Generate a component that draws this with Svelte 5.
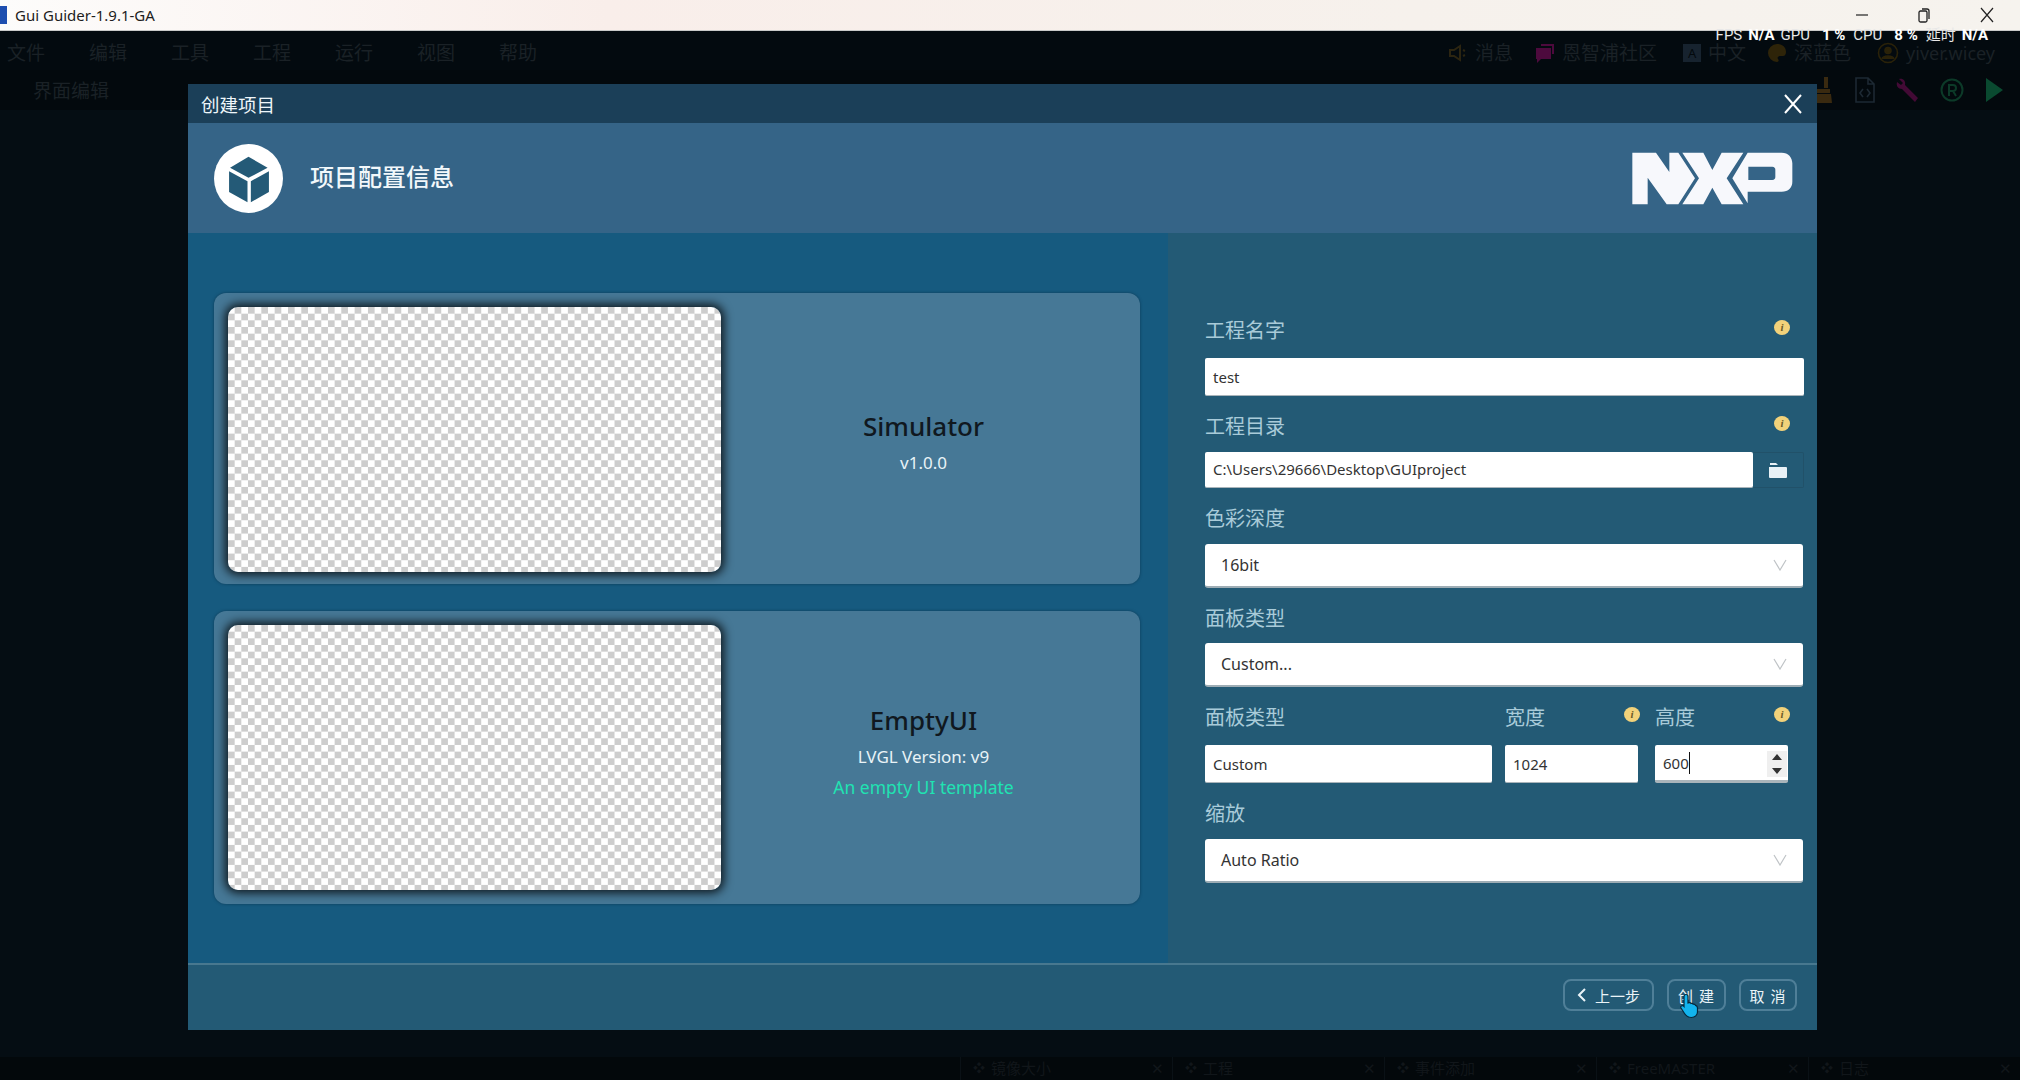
<script>
	const menus = ['文件', '编辑', '工具', '工程', '运行', '视图', '帮助'];
	const tabs = ['镜像大小', '工程', '事件添加', 'FreeMASTER', '日志'];
</script>

<div class="app">
	<header class="titlebar">
		<span class="app-logo"></span>
		<span class="app-name">Gui Guider-1.9.1-GA</span>
		<div class="win-btns">
			<svg width="14" height="14" viewBox="0 0 14 14"><path d="M1 7h12" stroke="#222" stroke-width="1.2" /></svg>
			<svg width="14" height="16" viewBox="0 0 14 16" fill="none" stroke="#222" stroke-width="1.3"><rect x="2" y="4" width="8" height="11" rx="1.5" /><path d="M5 2h5a2 2 0 0 1 2 2v8" /></svg>
			<svg width="16" height="16" viewBox="0 0 16 16"><path d="M2 1l12 14M14 1L2 15" stroke="#222" stroke-width="1.2" /></svg>
		</div>
	</header>

	<nav class="menubar">
		{#each menus as m}
			<span>{m}</span>
		{/each}
		<div class="menu-right">
			<span class="mi">
				<svg width="20" height="20" viewBox="0 0 20 20" fill="none" stroke="#2c2511" stroke-width="2"><path d="M2 7h4l6-4v14l-6-4H2zM15 7l2 1M15 13l2-1" /></svg>
				消息
			</span>
			<span class="mi chat">
				<svg width="20" height="22" viewBox="0 0 20 22"><path d="M1 6h15v11H6l-4 4v-4H1zM6 2h13v10h-2V4H6z" fill="#4d0a3d" /></svg>
				恩智浦社区
			</span>
			<span class="mi lang">
				<span class="lang-box">A</span>
				中文
			</span>
			<span class="mi">
				<svg width="20" height="20" viewBox="0 0 20 20"><path d="M10 1a9 9 0 1 0 0 18c2 0 2-2 1-3s0-3 2-3h3c2 0 3-2 3-4 0-5-4-8-9-8z" fill="#2e2409" /></svg>
				深蓝色
			</span>
			<span class="mi user">
				<svg width="22" height="22" viewBox="0 0 22 22" fill="none" stroke="#2a2209" stroke-width="1.6"><circle cx="11" cy="11" r="9.5" /><circle cx="11" cy="8.5" r="3" fill="#2a2209" /><path d="M5 17c1-4 11-4 12 0" fill="#2a2209" /></svg>
				yiver.wicey
			</span>
		</div>
	</nav>

	<div class="stats">
		<span>FPS</span><b>N/A</b><span>GPU</span><b class="w">1 %</b><span>CPU</span><b class="w">8 %</b><span>延时</span><b>N/A</b>
	</div>

	<div class="toolbar">
		<span class="tool-name">界面编辑</span>
		<div class="tool-icons">
			<svg width="24" height="28" viewBox="0 0 24 28"><path d="M14 1h4v11h-4zM6 13h14v4H6zM5 18h16l1 9H4z" fill="#3a2a10" /></svg>
			<svg width="22" height="26" viewBox="0 0 22 26" fill="none" stroke="#1d2933" stroke-width="1.6"><path d="M2 1h12l6 6v18H2zM14 1v6h6M9 12l-3 4 3 4M13 12l3 4-3 4" /></svg>
			<svg width="24" height="26" viewBox="0 0 24 26"><path d="M3 2c4-1 7 2 6 6l13 13-3 4L6 12C2 12 0 9 1 5l4 3 2-2z" fill="#430a35" /></svg>
			<svg width="24" height="24" viewBox="0 0 24 24" fill="none" stroke="#0c3a28" stroke-width="2"><circle cx="12" cy="12" r="10.5" /><path d="M9 18V7h4a3 3 0 0 1 0 6H9m4 0l3 5" /></svg>
			<svg width="20" height="26" viewBox="0 0 20 26"><path d="M2 1l17 12L2 25z" fill="#0a4a30" /></svg>
		</div>
	</div>

	<main class="workspace"></main>

	<footer class="bottom-tabs">
		{#each tabs as t}
			<div class="tab">
				<span class="tab-icon">❖</span>
				<span>{t}</span>
				<span class="tab-x">✕</span>
			</div>
		{/each}
	</footer>

	<section class="modal">
		<div class="modal-title">
			<span>创建项目</span>
			<svg width="18" height="20" viewBox="0 0 18 20"><path d="M1 1l16 18M17 1L1 19" stroke="#fff" stroke-width="2" /></svg>
		</div>

		<div class="modal-head">
			<svg class="cube" width="69" height="69" viewBox="72 54 206 206">
				<circle cx="175" cy="157" r="103" fill="#fff" />
				<path d="M175 92l57 33-57 30-55-30zM117 135l55 30v63l-55-31zM182 165l54-30v62l-54 31z" fill="#245a77" />
			</svg>
			<h1>项目配置信息</h1>
			<svg class="nxp" width="175" height="65" viewBox="0 0 525 195" fill="#f7f8fc">
				<path d="M22 20h71l40 58V20h27l50 77-50 78h-35L68 95v80H22z" />
				<path d="M172 20h63l27 52 28-52h65l-50 77 50 78h-65l-28-50-27 50h-63l50-78z" />
				<path fill-rule="evenodd" d="M368 20h102c20 0 32 14 32 32v55c0 18-12 30-32 30H368v35l-46-75zM370 62v40h72c6 0 9-4 9-9V71c0-5-3-9-9-9z" />
			</svg>
		</div>

		<div class="modal-body">
			<div class="templates">
				<article class="card">
					<div class="preview"></div>
					<div class="card-info">
						<h2>Simulator</h2>
						<p>v1.0.0</p>
					</div>
				</article>
				<article class="card second">
					<div class="preview"></div>
					<div class="card-info">
						<h2>EmptyUI</h2>
						<p>LVGL Version: v9</p>
						<p class="desc">An empty UI template</p>
					</div>
				</article>
			</div>

			<form class="config">
				<div class="field">
					<div class="label tight"><span>工程名字</span><i class="info">i</i></div>
					<div class="input">test</div>
				</div>
				<div class="field">
					<div class="label"><span>工程目录</span><i class="info">i</i></div>
					<div class="dir-row">
						<div class="input dir">C:\Users\29666\Desktop\GUIproject</div>
						<div class="folder">
							<svg width="18" height="15" viewBox="0 0 18 15"><path d="M1 0h6l2 2H1zM0 4h17a1 1 0 0 1 1 1v9a1 1 0 0 1-1 1H1a1 1 0 0 1-1-1z" fill="#e8f1f6" /></svg>
						</div>
					</div>
				</div>
				<div class="field">
					<div class="label"><span>色彩深度</span></div>
					<div class="select">16bit<svg width="14" height="12" viewBox="0 0 14 12"><path d="M1 1l6 10 6-10" fill="none" stroke="#bfc3c6" stroke-width="1.2" /></svg></div>
				</div>
				<div class="field">
					<div class="label low"><span>面板类型</span></div>
					<div class="select">Custom...<svg width="14" height="12" viewBox="0 0 14 12"><path d="M1 1l6 10 6-10" fill="none" stroke="#bfc3c6" stroke-width="1.2" /></svg></div>
				</div>
				<div class="field size-row">
					<div class="col name">
						<div class="label tight"><span>面板类型</span></div>
						<div class="input">Custom</div>
					</div>
					<div class="col width">
						<div class="label tight"><span>宽度</span><i class="info">i</i></div>
						<div class="input">1024</div>
					</div>
					<div class="col height">
						<div class="label tight"><span>高度</span><i class="info">i</i></div>
						<div class="input focused">
							<span>600</span><span class="caret"></span>
							<span class="spin">
								<svg width="10" height="22" viewBox="0 0 10 22"><path d="M5 1l5 6H0zM0 15h10l-5 6z" fill="#333" /></svg>
							</span>
						</div>
					</div>
				</div>
				<div class="field">
					<div class="label"><span>缩放</span></div>
					<div class="select">Auto Ratio<svg width="14" height="12" viewBox="0 0 14 12"><path d="M1 1l6 10 6-10" fill="none" stroke="#bfc3c6" stroke-width="1.2" /></svg></div>
				</div>
			</form>
		</div>

		<div class="modal-foot">
			<button class="btn back" type="button">
				<svg width="10" height="14" viewBox="0 0 10 14"><path d="M8 1L2 7l6 6" fill="none" stroke="#eaf4f8" stroke-width="2" /></svg>
				上一步
			</button>
			<button class="btn create" type="button">创 建</button>
			<button class="btn cancel" type="button">取 消</button>
			<svg class="hand" width="20" height="26" viewBox="0 0 20 26">
				<path d="M6 1.500c1.500 0 2 1 2 2V10l1-.3c1-.2 1.700.2 2 .8 1-.3 1.800 0 2.200.7 1-.2 2 .3 2.300 1.200 1 .2 2 1 2 2.600v4c0 3-2.500 5.500-6 5.500-3.500 0-5.500-1.500-7-4L1 15c-.6-1 0-2 .8-2.300.8-.3 1.700 0 2.200.7V3.500c0-1.200.8-2 2-2z" fill="#12b4ee" stroke="#06283c" stroke-width="1.200" />
			</svg>
		</div>
	</section>
</div>

<style>
	:global(body) {
		margin: 0;
		background: #050d13;
	}

	.app {
		position: relative;
		width: 2020px;
		height: 1080px;
		overflow: hidden;
		display: flex;
		flex-direction: column;
		background: #050d13;
		font-family: 'Noto Sans', 'Noto Sans CJK SC', sans-serif;
	}

	.titlebar {
		position: relative;
		z-index: 1;
		flex: none;
		height: 30px;
		display: flex;
		align-items: center;
		background: linear-gradient(90deg, #fdfcfb, #f9eeea 30%, #f6f1ec 70%, #f6f3ee);
		border-bottom: 1px solid #c9c9c9;
	}

	.app-logo {
		width: 7px;
		height: 18px;
		background: #1e4fb0;
	}

	.app-name {
		margin-left: 8px;
		font-size: 15px;
		color: #1d1d1d;
	}

	.win-btns {
		margin-left: auto;
		margin-right: 25px;
		display: flex;
		align-items: center;
		gap: 48px;
	}

	.menubar {
		flex: none;
		height: 39px;
		box-sizing: border-box;
		padding: 4px 0 0 7px;
		display: flex;
		align-items: center;
		gap: 44px;
		background: #030a0f;
		color: #1a2126;
		font-size: 19px;
		line-height: 20px;
	}

	.menu-right {
		margin-left: auto;
		margin-right: 25px;
		display: flex;
		align-items: center;
		gap: 26px;
	}

	.mi {
		display: flex;
		align-items: center;
		gap: 7px;
	}

	.mi.chat {
		margin-left: -4px;
	}

	.mi.lang {
		margin-right: -5px;
	}

	.mi.user {
		font-size: 18px;
	}

	.lang-box {
		width: 18px;
		height: 18px;
		background: #17232f;
		color: #03090d;
		font-size: 13px;
		line-height: 18px;
		text-align: center;
	}

	.stats {
		position: absolute;
		z-index: 2;
		top: 28px;
		right: 32px;
		display: flex;
		gap: 6px;
		font-family: Roboto, 'Noto Sans CJK SC', sans-serif;
		font-size: 15px;
		line-height: 14px;
		color: #e8e8e8;
	}

	.stats b {
		color: #fff;
	}

	.stats .w {
		margin: 0 2px 0 6px;
	}

	.toolbar {
		flex: none;
		height: 40px;
		display: flex;
		align-items: center;
		background: #03090d;
		color: #1a2126;
		font-size: 19px;
	}

	.tool-name {
		margin-left: 33px;
	}

	.tool-icons {
		margin-left: auto;
		margin-right: 16px;
		display: flex;
		align-items: center;
		gap: 20px;
	}

	.workspace {
		flex: 1;
	}

	.bottom-tabs {
		flex: none;
		height: 23px;
		display: flex;
		justify-content: flex-end;
		background: #03080b;
		color: #11161a;
		font-size: 15px;
		line-height: 23px;
	}

	.tab {
		width: 212px;
		box-sizing: border-box;
		display: flex;
		gap: 6px;
		padding: 0 8px 0 12px;
		border-left: 1px solid #0a1116;
	}

	.tab-icon {
		font-size: 12px;
	}

	.tab-x {
		margin-left: auto;
	}

	.modal {
		position: absolute;
		z-index: 3;
		left: 188px;
		top: 84px;
		width: 1629px;
		height: 946px;
		display: flex;
		flex-direction: column;
		background: #235a75;
	}

	.modal-title {
		flex: none;
		height: 39px;
		display: flex;
		align-items: center;
		justify-content: space-between;
		padding: 0 15px 0 13px;
		background: #1b3f58;
		color: #eef6fa;
		font-size: 18.500px;
	}

	.modal-head {
		flex: none;
		height: 110px;
		display: flex;
		align-items: center;
		padding: 0 17px 0 26px;
		background: #356487;
	}

	.modal-head h1 {
		margin: -6px 0 0 27px;
		font-size: 24px;
		font-weight: 500;
		color: #f2f8fb;
	}

	.nxp {
		margin-left: auto;
	}

	.modal-body {
		flex: none;
		height: 730px;
		display: flex;
	}

	.templates {
		flex: none;
		width: 980px;
		box-sizing: border-box;
		padding: 60px 28px 0 26px;
		background: #165a7f;
	}

	.card {
		height: 291px;
		box-sizing: border-box;
		display: flex;
		padding: 14px;
		border-radius: 12px;
		background: #467896;
		box-shadow: 0 0 3px rgba(8, 45, 70, 0.7);
	}

	.card.second {
		height: 293px;
		margin-top: 27px;
	}

	.preview {
		flex: none;
		width: 493px;
		height: 265px;
		border-radius: 10px;
		background: repeating-conic-gradient(#cdcdcd 0 25%, #fff 0 50%) 0 0 / 13.33px 13.33px;
		box-shadow: 0 0 10px 3px rgba(0, 0, 0, 0.8);
	}

	.card-info {
		flex: 1;
		display: flex;
		flex-direction: column;
		justify-content: center;
		align-items: center;
		padding-top: 8px;
		text-align: center;
		color: #e9f3f7;
	}

	.second .card-info {
		padding: 0 0 12px;
	}

	.card-info h2 {
		margin: 0 0 4px;
		font-size: 26px;
		font-weight: 500;
		line-height: 36px;
		color: #10181f;
	}

	.card-info p {
		margin: 0;
		font-size: 17px;
		line-height: 30px;
	}

	.card-info .desc {
		font-size: 17.500px;
		color: #20e3b2;
	}

	.config {
		flex: 1;
		box-sizing: border-box;
		padding: 83px 13px 0 37px;
	}

	.field {
		margin-bottom: 16px;
	}

	.label {
		height: 28px;
		box-sizing: border-box;
		margin-bottom: 12px;
		padding: 0 14px 2px 0;
		display: flex;
		align-items: center;
		justify-content: space-between;
		font-size: 20px;
		color: #a9cbd9;
	}

	.label.tight {
		margin-bottom: 14px;
	}

	.label.low {
		margin-bottom: 11px;
	}

	.info {
		width: 16px;
		height: 15px;
		margin-top: -3px;
		border-radius: 50%;
		background: #f2d27a;
		color: #6a5a28;
		font: italic bold 11px/15px 'Liberation Serif', serif;
		text-align: center;
	}

	.input {
		height: 38px;
		box-sizing: border-box;
		padding: 0 8px;
		display: flex;
		align-items: center;
		background: #fff;
		border-radius: 2px;
		border-bottom: 1px solid #a9b4ba;
		font-size: 15px;
		color: #333;
	}

	.dir-row {
		display: flex;
	}

	.input.dir {
		width: 548px;
		height: 36px;
		padding-bottom: 2px;
	}

	.folder {
		flex: 1;
		display: flex;
		align-items: center;
		justify-content: center;
		border: 1px solid #215169;
		border-left: none;
		border-radius: 0 2px 2px 0;
	}

	.select {
		height: 44px;
		box-sizing: border-box;
		margin-right: 1px;
		padding: 0 16px 1px;
		display: flex;
		align-items: center;
		justify-content: space-between;
		background: #fff;
		border-radius: 3px;
		border-bottom: 2px solid #9eadb5;
		font-size: 16px;
		color: #333;
	}

	.size-row {
		display: flex;
	}

	.col.name {
		width: 287px;
		margin-right: 13px;
	}

	.col.name .label {
		padding-right: 0;
	}

	.col.width {
		width: 133px;
		margin-right: 17px;
	}

	.col.width .label {
		padding-right: 0;
		margin-right: -2px;
	}

	.col.height {
		width: 133px;
	}

	.col.height .label {
		padding-right: 0;
		margin-right: -2px;
	}

	.focused {
		position: relative;
		border-bottom: 3px solid #a9b4ba;
	}

	.caret {
		width: 1px;
		height: 22px;
		background: #111;
	}

	.spin {
		position: absolute;
		right: 1px;
		top: 6px;
		width: 20px;
		height: 26px;
		display: flex;
		align-items: center;
		justify-content: center;
		background: #efefef;
	}

	.modal-foot {
		position: relative;
		flex: none;
		height: 67px;
		box-sizing: border-box;
		display: flex;
		align-items: center;
		justify-content: flex-end;
		gap: 13px;
		padding: 0 20px 5px 0;
		border-top: 2px solid #48788f;
	}

	.btn {
		height: 32px;
		box-sizing: border-box;
		display: flex;
		align-items: center;
		justify-content: center;
		gap: 8px;
		padding: 0;
		background: transparent;
		border: 2px solid #4f7f98;
		border-radius: 8px;
		font-family: 'Noto Sans', 'Noto Sans CJK SC', sans-serif;
		font-size: 15px;
		letter-spacing: 1px;
		color: #eaf4f8;
	}

	.back {
		width: 91px;
		letter-spacing: 0;
	}

	.create {
		width: 59px;
	}

	.cancel {
		width: 58px;
	}

	.hand {
		position: absolute;
		left: 1492px;
		top: 28px;
	}
</style>
